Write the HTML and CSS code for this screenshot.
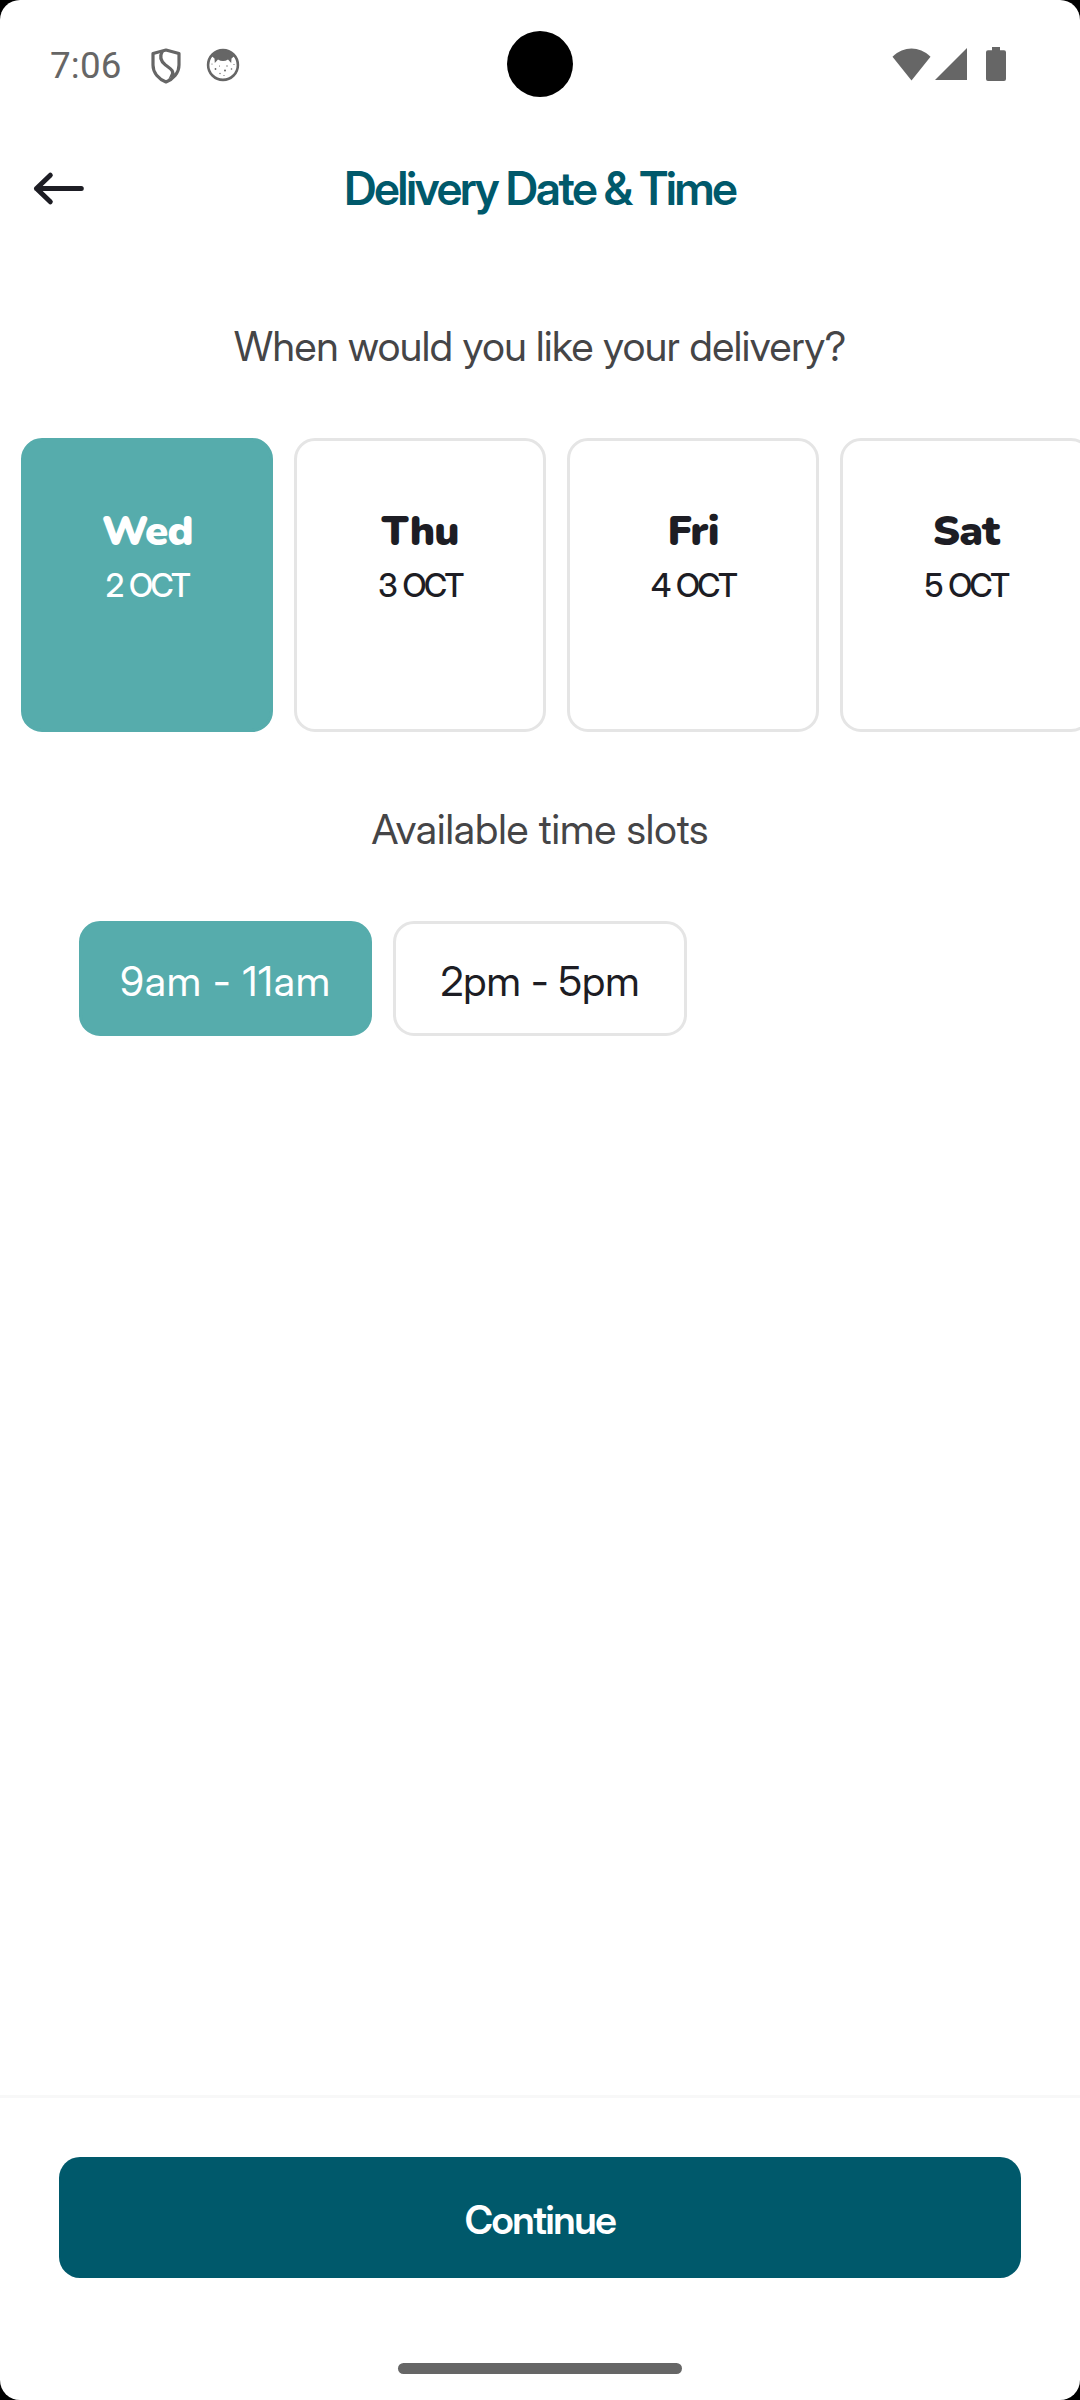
FILE: index.html
```html
<!DOCTYPE html>
<html lang="en">
<head>
<meta charset="utf-8">
<title>Delivery Date &amp; Time</title>
<link rel="stylesheet" href="styles.css">
</head>
<body>
<div class="screen">
  <div class="status-bar">
    <div class="status-left">
      <span class="clock">7:06</span>
      <svg class="shield" width="30" height="36" viewBox="0 0 30 36" fill="none" stroke="#666" stroke-width="3.2" stroke-linejoin="round">
        <path d="M15 2 28 5.500V17C28 25 22 31 15 34 8 31 2 25 2 17V5.500Z"/>
        <path d="M11.500 3C8 9 10 13.500 14.500 17 20 21 23.500 22.500 21 29"/>
        <path d="M21.500 22 24 26 17 32Z" fill="#666" stroke="none"/>
      </svg>
      <svg class="face" width="34" height="34" viewBox="0 0 34 34">
        <circle cx="17" cy="17" r="14.900" fill="none" stroke="#666" stroke-width="2.600"/>
        <path d="M5 7.500C11 0 23 0 29 7.500L25.500 10.500 25.200 15 22 11.500Q17 14.500 12 11.500L8.800 15 8.500 10.500Z" fill="#666"/>
        <g fill="#666">
          <circle cx="9.500" cy="21" r=".9"/><circle cx="13.500" cy="18" r=".6"/><circle cx="19" cy="22.500" r="1"/><circle cx="21" cy="18" r=".7"/>
          <circle cx="25.500" cy="21" r=".8"/><circle cx="14" cy="25.500" r=".7"/><circle cx="18" cy="27.500" r=".6"/><circle cx="6" cy="16" r=".6"/><circle cx="28" cy="16.500" r=".6"/>
        </g>
      </svg>
    </div>
    <div class="camera"></div>
    <div class="status-right">
      <svg class="wifi" width="39" height="33" viewBox="0 0 39 33"><path d="M.5 8.700C12 -2.200 27 -2.200 38.500 8.700L19.500 32.500Z" fill="#666"/></svg>
      <svg class="signal" width="32" height="32" viewBox="0 0 32 32"><path d="M32 0V32H0Z" fill="#666"/></svg>
      <svg class="battery" width="20" height="34" viewBox="0 0 20 34"><path d="M6 0h8v3.300h4a2 2 0 0 1 2 2V32a2 2 0 0 1-2 2H2a2 2 0 0 1-2-2V5.300a2 2 0 0 1 2-2h4Z" fill="#666"/></svg>
    </div>
  </div>

  <header class="app-bar">
    <svg class="back" width="52" height="36" viewBox="0 0 52 36" fill="none" stroke="#1d1d24" stroke-width="5" stroke-linecap="round" stroke-linejoin="round">
      <path d="M4.500 18.500H49.300M18.300 5.200 4.500 18.500 18.300 31.800"/>
    </svg>
    <h1 class="title">Delivery Date &amp; Time</h1>
  </header>

  <main class="content">
    <h2 class="question">When would you like your delivery?</h2>
    <div class="days">
      <div class="day selected"><span class="weekday">Wed</span><span class="date">2 OCT</span></div>
      <div class="day"><span class="weekday">Thu</span><span class="date">3 OCT</span></div>
      <div class="day"><span class="weekday">Fri</span><span class="date">4 OCT</span></div>
      <div class="day"><span class="weekday">Sat</span><span class="date">5 OCT</span></div>
    </div>
    <h2 class="question slots-title">Available time slots</h2>
    <div class="slots">
      <div class="slot morning selected">9am - 11am</div>
      <div class="slot">2pm - 5pm</div>
    </div>
  </main>

  <footer class="footer">
    <button class="continue">Continue</button>
    <div class="home-handle"></div>
  </footer>
</div>
</body>
</html>
```
FILE: styles.css
```css
* { box-sizing: border-box; }

body {
  margin: 0;
  background: #000;
  font-family: "Inter Display", Inter, "Liberation Sans", sans-serif;
  color: #1d1d24;
}

.screen {
  display: flex;
  flex-direction: column;
  width: 1080px;
  height: 2400px;
  overflow: hidden;
  border-radius: 20px;
  background: #fff;
}

.status-bar {
  display: grid;
  grid-template-columns: 1fr 66px 1fr;
  align-items: center;
  height: 128px;
}

.status-left, .status-right { display: flex; align-items: center; }
.status-left { padding-left: 50px; }
.status-right { justify-content: flex-end; padding-right: 74px; }

.clock {
  width: 101px;
  padding-top: 4px;
  font: 400 36.75px/44px Roboto, sans-serif;
  letter-spacing: 0.2px;
  color: #666;
}

.shield { margin-top: 3px; }
.face { margin: 2px 0 0 25px; }
.signal { margin-left: 4px; }
.battery { margin-left: 19px; }

.camera { height: 66px; border-radius: 50%; background: #000; }

.app-bar {
  display: grid;
  grid-template-columns: 100px 1fr 100px;
  align-items: center;
  height: 120px;
}

.back { margin-left: 32px; }

.title {
  margin: 0;
  font-size: 46px;
  font-weight: 600;
  line-height: 56px;
  letter-spacing: -2.11px;
  text-align: center;
  color: #00596b;
}

.content { flex: 1; }

.question {
  margin: 0;
  padding-top: 73px;
  height: 190px;
  font-size: 41px;
  font-weight: 400;
  line-height: 50px;
  letter-spacing: -0.42px;
  text-align: center;
  color: #454547;
}

.days {
  display: flex;
  gap: 21px;
  padding-left: 21px;
  overflow: hidden;
}

.day {
  display: flex;
  flex: 0 0 252px;
  flex-direction: column;
  align-items: center;
  height: 294px;
  padding-top: 64px;
  border: 3px solid #e5e5e5;
  border-radius: 21px;
}

.weekday {
  font: 900 42px/54px Nunito, "Open Sans", sans-serif;
  letter-spacing: -0.9px;
}

.date {
  font-size: 32px;
  font-weight: 500;
  line-height: 54px;
  letter-spacing: -2.6px;
  word-spacing: 2.5px;
}

.selected {
  border-color: #56acac;
  background: #56acac;
  color: #fff;
}

.slots-title {
  padding-top: 72px;
  height: 189px;
  letter-spacing: -0.03px;
}

.slots { display: flex; gap: 21px; padding-left: 79px; }

.slot {
  width: 294px;
  height: 115px;
  padding-top: 5px;
  border: 3px solid #e5e5e5;
  border-radius: 21px;
  font-size: 41px;
  line-height: 105px;
  letter-spacing: -0.09px;
  text-align: center;
}

.morning { width: 293px; letter-spacing: 0.8px; }

.slot.selected { border-color: #56acac; }

.footer {
  display: flex;
  flex-direction: column;
  align-items: center;
  height: 305px;
  padding-top: 59px;
  border-top: 3px solid #f8f8f8;
}

.continue {
  width: 962px;
  height: 121px;
  padding: 4px 0 0;
  border: 0;
  border-radius: 21px;
  background: #00596b;
  font: 600 39px/48px "Inter Display", Inter, "Liberation Sans", sans-serif;
  letter-spacing: -1.38px;
  color: #fff;
}

.home-handle {
  width: 284px;
  height: 11px;
  margin-top: 85px;
  border-radius: 6px;
  background: #666;
}
```
